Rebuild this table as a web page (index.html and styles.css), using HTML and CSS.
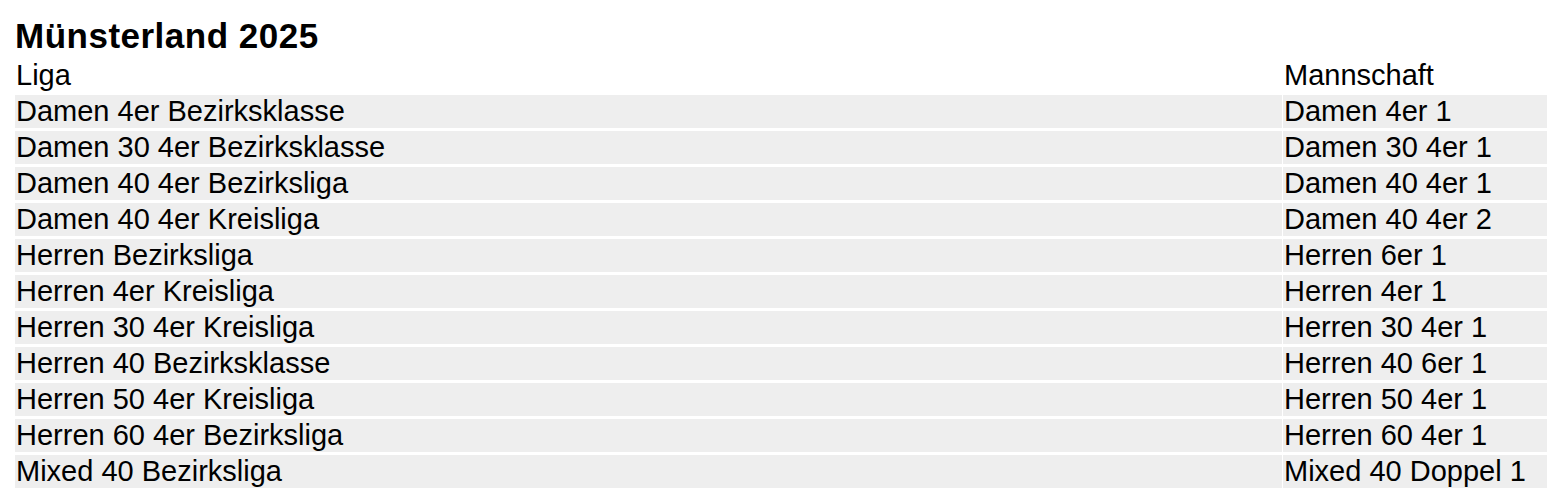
FILE: index.html
```html
<!DOCTYPE html>
<html lang="de">
<head>
<meta charset="utf-8">
<title>Münsterland 2025</title>
<link rel="stylesheet" href="styles.css">
</head>
<body>
<div class="page">
  <h1 class="title">Münsterland 2025</h1>
  <table class="leagues">
    <thead>
      <tr><th class="col-liga">Liga</th><th class="col-team">Mannschaft</th></tr>
    </thead>
    <tbody>
      <tr><td>Damen 4er Bezirksklasse</td><td>Damen 4er 1</td></tr>
      <tr><td>Damen 30 4er Bezirksklasse</td><td>Damen 30 4er 1</td></tr>
      <tr><td>Damen 40 4er Bezirksliga</td><td>Damen 40 4er 1</td></tr>
      <tr><td>Damen 40 4er Kreisliga</td><td>Damen 40 4er 2</td></tr>
      <tr><td>Herren Bezirksliga</td><td>Herren 6er 1</td></tr>
      <tr><td>Herren 4er Kreisliga</td><td>Herren 4er 1</td></tr>
      <tr><td>Herren 30 4er Kreisliga</td><td>Herren 30 4er 1</td></tr>
      <tr><td>Herren 40 Bezirksklasse</td><td>Herren 40 6er 1</td></tr>
      <tr><td>Herren 50 4er Kreisliga</td><td>Herren 50 4er 1</td></tr>
      <tr><td>Herren 60 4er Bezirksliga</td><td>Herren 60 4er 1</td></tr>
      <tr><td>Mixed 40 Bezirksliga</td><td>Mixed 40 Doppel 1</td></tr>
    </tbody>
  </table>
</div>
</body>
</html>
```
FILE: styles.css
```css
html, body {
  margin: 0;
  padding: 0;
  background: #ffffff;
}
body {
  font-family: "Liberation Sans", Arial, Helvetica, sans-serif;
  color: #000000;
}
.page {
  padding: 15px 0 0 15px;
}
.title {
  margin: 0;
  font-size: 35px;
  font-weight: bold;
  line-height: 41px;
  letter-spacing: 0.5px;
}
.leagues {
  width: calc(100% + 1px);
  border-collapse: separate;
  border-spacing: 1px 3px;
  margin: 0 0 0 -1px;
  font-size: 29px;
  letter-spacing: 0;
}
.leagues th,
.leagues td {
  text-align: left;
  font-weight: normal;
  padding: 0 0 0 1px;
  height: 33px;
  line-height: 33px;
  white-space: nowrap;
  vertical-align: middle;
}
.leagues td {
  background: #eeeeee;
}
.leagues .col-team {
  width: 263px;
}
```
